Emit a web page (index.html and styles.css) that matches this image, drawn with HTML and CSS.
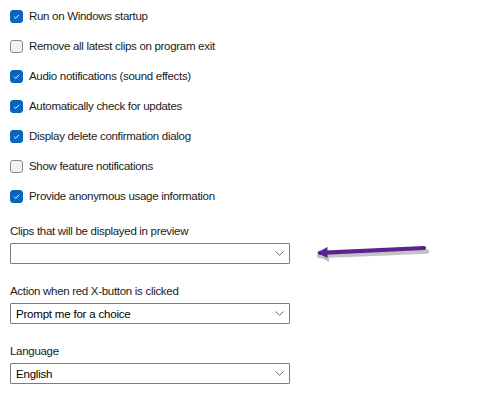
FILE: index.html
```html
<!DOCTYPE html>
<html>
<head>
<meta charset="utf-8">
<link rel="stylesheet" href="styles.css">
</head>
<body>
<div class="page">
  <div class="checks">
    <div class="row"><span class="box on"><svg viewBox="0 0 13 13"><path d="M3.5 6.7 L5.6 8.7 L9.6 4.5" fill="none" stroke="#fff" stroke-width="1.1"/></svg></span><span class="txt">Run on Windows startup</span></div>
    <div class="row"><span class="box"></span><span class="txt">Remove all latest clips on program exit</span></div>
    <div class="row"><span class="box on"><svg viewBox="0 0 13 13"><path d="M3.5 6.7 L5.6 8.7 L9.6 4.5" fill="none" stroke="#fff" stroke-width="1.1"/></svg></span><span class="txt">Audio notifications (sound effects)</span></div>
    <div class="row"><span class="box on"><svg viewBox="0 0 13 13"><path d="M3.5 6.7 L5.6 8.7 L9.6 4.5" fill="none" stroke="#fff" stroke-width="1.1"/></svg></span><span class="txt">Automatically check for updates</span></div>
    <div class="row"><span class="box on"><svg viewBox="0 0 13 13"><path d="M3.5 6.7 L5.6 8.7 L9.6 4.5" fill="none" stroke="#fff" stroke-width="1.1"/></svg></span><span class="txt">Display delete confirmation dialog</span></div>
    <div class="row"><span class="box"></span><span class="txt">Show feature notifications</span></div>
    <div class="row"><span class="box on"><svg viewBox="0 0 13 13"><path d="M3.5 6.7 L5.6 8.7 L9.6 4.5" fill="none" stroke="#fff" stroke-width="1.1"/></svg></span><span class="txt">Provide anonymous usage information</span></div>
  </div>
  <div class="fields">
    <div class="field">
      <div class="label">Clips that will be displayed in preview</div>
      <div class="select"><span class="val"></span><svg class="chev" viewBox="0 0 9 5"><path d="M0.5 0.5 L4.5 4.3 L8.5 0.5" fill="none" stroke="#5a5a5a" stroke-width="0.9"/></svg></div>
    </div>
    <div class="field">
      <div class="label">Action when red X-button is clicked</div>
      <div class="select"><span class="val">Prompt me for a choice</span><svg class="chev" viewBox="0 0 9 5"><path d="M0.5 0.5 L4.5 4.3 L8.5 0.5" fill="none" stroke="#5a5a5a" stroke-width="0.9"/></svg></div>
    </div>
    <div class="field">
      <div class="label">Language</div>
      <div class="select"><span class="val">English</span><svg class="chev" viewBox="0 0 9 5"><path d="M0.5 0.5 L4.5 4.3 L8.5 0.5" fill="none" stroke="#5a5a5a" stroke-width="0.9"/></svg></div>
    </div>
  </div>
  <svg class="arrow" width="130" height="30" viewBox="0 0 130 30">
    <g transform="translate(2,3)" opacity="0.35">
      <path d="M7 13 L115 8.5" stroke="#555" stroke-width="4.5" stroke-linecap="round" fill="none"/>
      <path d="M6 13 L17 7 L17 19 Z" fill="#555"/>
    </g>
    <path d="M10 12.8 L114 8" stroke="#5b2392" stroke-width="4.2" stroke-linecap="round" fill="none"/>
    <path d="M7 12.8 L17.5 7 L17.5 18 Z" fill="#5b2392"/>
  </svg>
</div>
</body>
</html>
```
FILE: styles.css
```css
html, body {
  margin: 0;
  padding: 0;
  background: #ffffff;
}
.page {
  position: relative;
  width: 480px;
  height: 418px;
  font-family: "Liberation Sans", Arial, sans-serif;
  font-size: 11.5px;
  letter-spacing: -0.3px;
  color: #1b1b1b;
}
.checks {
  padding-top: 1px;
  padding-left: 10px;
}
.row {
  height: 30px;
  display: flex;
  align-items: center;
  gap: 6px;
}
.box {
  width: 11px;
  height: 11px;
  border: 1px solid #8b8b8b;
  border-radius: 3px;
  background: #f1f1f1;
  display: flex;
}
.box.on {
  background: #0a64be;
  border-color: #0a64be;
}
.box svg {
  width: 11px;
  height: 11px;
}
.fields {
  padding-top: 12px;
  padding-left: 10px;
  display: flex;
  flex-direction: column;
  gap: 19px;
}
.field {
  display: flex;
  flex-direction: column;
  gap: 4px;
}
.label {
  height: 16px;
  line-height: 16px;
}
.select {
  width: 278px;
  height: 19px;
  border: 1px solid #7a7a7a;
  border-radius: 1px;
  display: flex;
  align-items: center;
  justify-content: space-between;
}
.val {
  padding-left: 5px;
  font-size: 11.5px;
  letter-spacing: -0.2px;
  color: #000;
}
.chev {
  width: 9px;
  height: 5px;
  margin-right: 5px;
}
.arrow {
  position: absolute;
  left: 310px;
  top: 240px;
}
```
